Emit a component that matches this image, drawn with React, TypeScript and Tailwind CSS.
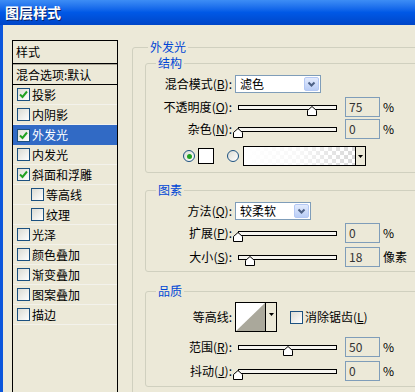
import React from "react";

const FONT = { fontFamily: '"Noto Sans CJK SC", "Noto Sans", sans-serif' };

const styles = [
  { label: "投影", checked: true },
  { label: "内阴影" },
  { label: "外发光", checked: true, active: true },
  { label: "内发光" },
  { label: "斜面和浮雕", checked: true },
  { label: "等高线", indent: true },
  { label: "纹理", indent: true },
  { label: "光泽" },
  { label: "颜色叠加" },
  { label: "渐变叠加" },
  { label: "图案叠加" },
  { label: "描边" },
];

const CheckBox: React.FC<{ checked?: boolean }> = ({ checked }) => (
  <span className="w-[13px] h-[13px] shrink-0 border border-[#1c5180] bg-gradient-to-br from-[#dcdcd4] to-white flex items-center justify-center">
    {checked && (
      <svg width="9" height="9" viewBox="0 0 9 9">
        <path d="M1 4.5 L3.5 7 L8 1.5" fill="none" stroke="#21a121" strokeWidth="2" />
      </svg>
    )}
  </span>
);

const Radio: React.FC<{ on?: boolean }> = ({ on }) => (
  <span className="w-[12px] h-[12px] shrink-0 rounded-full border border-[#1c5180] bg-gradient-to-br from-[#dcdcd4] to-white flex items-center justify-center">
    {on && <span className="w-[5px] h-[5px] rounded-full bg-[#21a121]" />}
  </span>
);

const Key: React.FC<{ text: string; k: string }> = ({ text, k }) => (
  <>
    {text}(<u>{k}</u>):
  </>
);

const Label: React.FC<React.PropsWithChildren> = ({ children }) => (
  <span className="w-[86px] shrink-0 text-right whitespace-nowrap">{children}</span>
);

const Select: React.FC<{ value: string; w: string }> = ({ value, w }) => (
  <div className={`ml-[3px] flex h-[18px] ${w} border border-[#7f9db9] bg-white`}>
    <span className="flex-1 pl-[4px] leading-[16px]">{value}</span>
    <span className="m-[1px] w-[15px] rounded-[2px] border border-[#b4c8f4] bg-gradient-to-b from-[#e3ebfd] to-[#b9cdf6] flex items-center justify-center">
      <svg width="9" height="7" viewBox="0 0 9 7">
        <path d="M1.5 1.5 L4.5 4.5 L7.5 1.5" fill="none" stroke="#4d6185" strokeWidth="2" />
      </svg>
    </span>
  </div>
);

const Slider: React.FC<{ pos: number }> = ({ pos }) => (
  <div className="relative ml-[1px] w-[106px] h-[20px] shrink-0">
    <div className="absolute left-[5px] right-[2px] top-[8px] h-[5px] border border-black bg-[#f6f5f0]" />
    <svg
      className="absolute top-[9px]"
      style={{ left: 5 + pos * 99 - 5 }}
      width="10"
      height="10"
      viewBox="0 0 10 10"
    >
      <path d="M5 0.5 L9.5 4.5 L9.5 9.5 L0.5 9.5 L0.5 4.5 Z" fill="#fff" stroke="#000" />
    </svg>
  </div>
);

const Field: React.FC<{ value: string; unit: string }> = ({ value, unit }) => (
  <>
    <span className="ml-[6px] w-[35px] h-[20px] shrink-0 border border-[#7f9db9] pl-[3px] leading-[18px] text-[#333]">
      {value}
    </span>
    <span className="ml-[3px]">{unit}</span>
  </>
);

const SliderRow: React.FC<{ label: React.ReactNode; pos: number; value: string; unit?: string; className?: string }> = ({
  label,
  pos,
  value,
  unit = "%",
  className = "",
}) => (
  <div className={`flex items-center h-[20px] ${className}`}>
    <Label>{label}</Label>
    <Slider pos={pos} />
    <Field value={value} unit={unit} />
  </div>
);

// XP style group box; the title sits on the top border
const Group: React.FC<React.PropsWithChildren<{ title: string; className?: string; titlePos?: string }>> = ({
  title,
  className = "",
  titlePos = "left-[10px]",
  children,
}) => (
  <div className={`relative border border-[#d0d0bf] rounded-[3px] ${className}`}>
    <span className={`absolute -top-[9px] ${titlePos} px-[2px] leading-[16px] bg-[#ece9d8] text-[#0046d5]`}>{title}</span>
    {children}
  </div>
);

export default function App() {
  return (
    <div className="w-[415px] h-[392px] overflow-hidden bg-[#ece9d8] text-[12px] text-black flex flex-col" style={FONT}>
      <div className="h-[25px] shrink-0 bg-gradient-to-b from-[#3d8df5] via-[#0058e6] to-[#0046c8] flex items-center pl-[5px]">
        <span className="text-[14px] font-bold text-white [text-shadow:1px_1px_0_#0a246a]">图层样式</span>
      </div>

      <div className="flex-1 flex items-start border-l-[3px] border-[#0b56dc]">
        {/* style list */}
        <div className="ml-[9px] mt-[15px] w-[106px] h-[400px] shrink-0 border border-black">
          <div className="h-[23px] pl-[3px] leading-[22px] border-b border-black">样式</div>
          <div className="h-[21px] pl-[3px] leading-[20px] border-t border-[#aca899] border-b border-b-black">混合选项:默认</div>
          {styles.map((s) => (
            <div
              key={s.label}
              className={`h-[20px] flex items-center gap-[2px] ${s.indent ? "pl-[18px]" : "pl-[4px]"} ${
                s.active ? "bg-[#316ac5] text-white" : "border-b border-[#f3f2ec]"
              }`}
            >
              <CheckBox checked={s.checked} />
              <span>{s.label}</span>
            </div>
          ))}
        </div>

        {/* settings */}
        <div className="ml-[14px] mt-[22px] w-[300px] shrink-0">
          <Group title="外发光" titlePos="left-[15px]" className="h-[400px] pl-[12px]">
            <Group title="结构" className="mt-[15px] pt-[11px] pb-[6px]">
              <div className="flex items-center h-[18px]">
                <Label>
                  <Key text="混合模式" k="B" />
                </Label>
                <Select value="滤色" w="w-[86px]" />
              </div>
              <SliderRow className="mt-[4px]" label={<Key text="不透明度" k="O" />} pos={0.75} value="75" />
              <SliderRow className="mt-[2px]" label={<Key text="杂色" k="N" />} pos={0} value="0" />
              <div className="flex items-center h-[20px] mt-[7px] pl-[37px]">
                <Radio on />
                <span className="ml-[3px] w-[16px] h-[16px] border border-black bg-white" />
                <span className="ml-[13px]">
                  <Radio />
                </span>
                <div className="ml-[4px] flex h-[20px] border border-black">
                  <div className="relative w-[111px] bg-[repeating-conic-gradient(#d8d8d8_0_25%,#fff_0_50%)] bg-[length:8px_8px]">
                    <div className="absolute inset-0 bg-gradient-to-r from-white via-white/80 to-transparent" />
                  </div>
                  <div className="w-[10px] border-l border-black bg-[#ece9d8] flex items-center justify-center">
                    <svg width="5" height="3" viewBox="0 0 5 3">
                      <path d="M0 0 H5 L2.5 3 Z" fill="#000" />
                    </svg>
                  </div>
                </div>
              </div>
            </Group>

            <Group title="图素" className="mt-[17px] pt-[11px] pb-[4px]">
              <div className="flex items-center h-[18px]">
                <Label>
                  <Key text="方法" k="Q" />
                </Label>
                <Select value="较柔软" w="w-[76px]" />
              </div>
              <SliderRow className="mt-[3px]" label={<Key text="扩展" k="P" />} pos={0} value="0" />
              <SliderRow className="mt-[4px]" label={<Key text="大小" k="S" />} pos={0.12} value="18" unit="像素" />
            </Group>

            <Group title="品质" className="mt-[19px] pt-[10px] pb-[5px]">
              <div className="flex items-center h-[30px]">
                <Label>等高线:</Label>
                <div className="ml-[3px] flex h-[30px] border border-black">
                  <svg width="29" height="28" viewBox="0 0 29 28" className="bg-white">
                    <path d="M0 28 L29 0 L29 28 Z" fill="#aaa89b" />
                  </svg>
                  <div className="w-[11px] border-l border-black bg-[#ece9d8] flex justify-center pt-[10px]">
                    <svg width="5" height="3" viewBox="0 0 5 3">
                      <path d="M0 0 H5 L2.5 3 Z" fill="#000" />
                    </svg>
                  </div>
                </div>
                <span className="ml-[13px]">
                  <CheckBox />
                </span>
                <span className="ml-[2px]">
                  消除锯齿(<u>L</u>)
                </span>
              </div>
              <SliderRow className="mt-[5px]" label={<Key text="范围" k="R" />} pos={0.5} value="50" />
              <SliderRow className="mt-[4px]" label={<Key text="抖动" k="J" />} pos={0} value="0" />
            </Group>
          </Group>
        </div>
      </div>
    </div>
  );
}
